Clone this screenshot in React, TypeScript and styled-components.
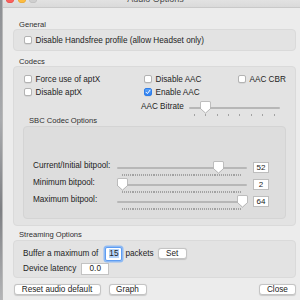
import styled, { createGlobalStyle } from 'styled-components';

const GlobalStyle = createGlobalStyle`
  html, body {
    margin: 0;
    padding: 0;
    background: #ececec;
  }
`;

const Page = styled.div`
  display: flex;
  width: 300px;
  height: 300px;
  overflow: hidden;
  background: #ececec;
  font-family: "Liberation Sans", Arial, sans-serif;
  color: #232323;
`;

const DesktopStrip = styled.div`
  width: 2px;
  flex: none;
  background: linear-gradient(180deg, #8d8f93, #a9abae 40%, #7e8084 70%, #b4b5b7);
`;

const Window = styled.div`
  flex: 1;
  display: flex;
  flex-direction: column;
  border-left: 1px solid #b8b8b8;
  background: #ececec;
`;

const TitleBar = styled.div`
  display: grid;
  grid-template-columns: 1fr auto 1fr;
  height: 7px;
  overflow: hidden;
  border-bottom: 1px solid #c9c9c9;
  background: linear-gradient(180deg, #e2e2e2, #dadada);
`;

const Lights = styled.div`
  display: flex;
  gap: 3.5px;
  margin: -5px 0 0 3px;
`;

const Light = styled.span<{ $color: string; $edge: string }>`
  width: 8px;
  height: 8px;
  border-radius: 50%;
  background: ${(p) => p.$color};
  box-shadow: inset 0 0 0 0.5px ${(p) => p.$edge};
`;

const Title = styled.div`
  margin-top: -6px;
  font-size: 9px;
  line-height: 10px;
  color: #4a4a4a;
`;

const Body = styled.div`
  display: flex;
  flex-direction: column;
  padding: 0 12px 0 10px;
`;

const SectionLabel = styled.div<{ $top: number; $left?: number }>`
  margin: ${(p) => p.$top}px 0 0.5px ${(p) => p.$left ?? 6}px;
  font-size: 7.6px;
  line-height: 9px;
  color: #2f2f2f;
`;

const GroupBox = styled.div`
  border: 1px solid #dadada;
  border-radius: 4px;
  background: #e3e3e3;
`;

const GeneralBox = styled(GroupBox)`
  padding: 5px 10px 5px 10px;
`;

const CodecsBox = styled(GroupBox)`
  display: flex;
  flex-direction: column;
  padding: 7px 9px 6px 10px;
`;

const CheckGrid = styled.div`
  display: grid;
  grid-template-columns: 120px 94px 1fr;
  row-gap: 3px;
`;

const CheckRow = styled.label`
  display: flex;
  align-items: center;
  gap: 3.5px;
  height: 10px;
  font-size: 8.2px;
  white-space: nowrap;
`;

const Box = styled.span<{ $checked?: boolean }>`
  display: grid;
  place-items: center;
  width: 8px;
  height: 8px;
  flex: none;
  box-sizing: border-box;
  border-radius: 2px;
  border: 0.5px solid ${(p) => (p.$checked ? '#2f7de8' : '#b3b3b3')};
  background: ${(p) => (p.$checked ? 'linear-gradient(180deg, #5aa2f8, #2f7ff0)' : '#ffffff')};
  box-shadow: 0 0.5px 0.5px rgba(0, 0, 0, 0.12);
`;

const BitrateRow = styled.div`
  display: flex;
  align-items: flex-start;
  gap: 5px;
  margin: 4px 0 0 117px;
  font-size: 8.2px;

  span {
    line-height: 12px;
  }
`;

const SbcBox = styled.div`
  display: flex;
  flex-direction: column;
  margin-left: -1px;
  padding: 34px 0 6px 9px;
  border: 1px solid #d4d4d4;
  border-radius: 4px;
  background: #dddddd;
`;

const SbcRow = styled.div`
  display: grid;
  grid-template-columns: 78px 130px 16px;
  column-gap: 6px;
  height: 17px;
  align-items: start;
  font-size: 8.2px;

  span {
    line-height: 10px;
  }
`;

const ValueBox = styled.div`
  width: 16px;
  height: 11px;
  margin-top: 1px;
  box-sizing: border-box;
  border: 0.5px solid #bdbdbd;
  background: #ffffff;
  font-size: 8px;
  line-height: 10px;
  text-align: center;
`;

const SliderWrap = styled.div<{ $width: number }>`
  position: relative;
  width: ${(p) => p.$width}px;
  height: 16px;
`;

const Track = styled.div`
  position: absolute;
  left: 0;
  right: 0;
  top: 6px;
  height: 2px;
  border-radius: 1px;
  background: #b7b7b7;
`;

const Ticks = styled.div`
  position: absolute;
  left: 5px;
  right: 5px;
  top: 13px;
  display: flex;
  justify-content: space-between;
`;

const Tick = styled.i`
  width: 1px;
  height: 2px;
  background: #a2a2a2;
`;

const Thumb = styled.svg`
  position: absolute;
  top: 0;
  width: 11px;
  height: 13px;
  filter: drop-shadow(0 0.5px 0.5px rgba(0, 0, 0, 0.25));
`;

const StreamBox = styled(GroupBox)`
  display: flex;
  flex-direction: column;
  gap: 2px;
  padding: 6px 9px 2px 9px;
  font-size: 8.2px;
`;

const StreamRow = styled.div`
  display: flex;
  align-items: center;
  white-space: nowrap;
`;

const NumberInput = styled.div<{ $w: number; $h: number; $focus?: boolean }>`
  width: ${(p) => p.$w}px;
  height: ${(p) => p.$h}px;
  box-sizing: border-box;
  display: grid;
  place-items: center;
  background: #ffffff;
  border: 0.5px solid ${(p) => (p.$focus ? '#5d9cf2' : '#c3c3c3')};
  box-shadow: ${(p) => (p.$focus ? '0 0 0 1.5px #8fbaf3' : 'none')};
  border-radius: ${(p) => (p.$focus ? '2px' : '0')};

  mark {
    background: #b5d3f8;
    color: #232323;
    padding: 0 0.5px;
  }
`;

const Button = styled.button<{ $w: number }>`
  width: ${(p) => p.$w}px;
  height: 11px;
  padding: 0;
  border: 0.5px solid #c4c4c4;
  border-radius: 3px;
  background: #ffffff;
  box-shadow: 0 0.5px 1px rgba(0, 0, 0, 0.15);
  font-family: inherit;
  font-size: 8.2px;
  line-height: 10px;
  color: #232323;
`;

const ButtonBar = styled.div`
  display: flex;
  align-items: center;
  gap: 8px;
  margin-top: 6px;
  padding-left: 0.5px;

  & > :last-child {
    margin-left: auto;
  }
`;

function Check({ label, checked }: { label: string; checked?: boolean }) {
  return (
    <CheckRow>
      <Box $checked={checked}>
        {checked ? (
          <svg width="6" height="6" viewBox="0 0 6 6">
            <path d="M1 3.2 L2.4 4.6 L5 1.2" fill="none" stroke="#fff" strokeWidth="1" strokeLinecap="round" strokeLinejoin="round" />
          </svg>
        ) : null}
      </Box>
      {label}
    </CheckRow>
  );
}

function Slider({ value, min, max, width, ticks }: { value: number; min: number; max: number; width: number; ticks: number }) {
  const frac = (value - min) / (max - min);
  const left = 5 + frac * (width - 10) - 5.5;
  return (
    <SliderWrap $width={width}>
      <Track />
      <Ticks>
        {Array.from({ length: ticks }).map((_, i) => (
          <Tick key={i} />
        ))}
      </Ticks>
      <Thumb viewBox="0 0 11 13" style={{ left }}>
        <path d="M1.8 0.5 H9.2 A1.3 1.3 0 0 1 10.5 1.8 V7.6 L5.5 12 L0.5 7.6 V1.8 A1.3 1.3 0 0 1 1.8 0.5 Z" fill="#ffffff" stroke="#a9a9a9" strokeWidth="0.6" />
      </Thumb>
    </SliderWrap>
  );
}

const bitpools = [
  { label: 'Current/Initial bitpool:', value: 52 },
  { label: 'Minimum bitpool:', value: 2 },
  { label: 'Maximum bitpool:', value: 64 },
];

export default function App() {
  return (
    <Page>
      <GlobalStyle />
      <DesktopStrip />
      <Window>
        <TitleBar>
          <Lights>
            <Light $color="#fc605c" $edge="#de4a46" />
            <Light $color="#fdbc40" $edge="#dea032" />
            <Light $color="#cfcfcf" $edge="#b9b9b9" />
          </Lights>
          <Title>Audio Options</Title>
          <div />
        </TitleBar>
        <Body>
          <SectionLabel $top={11.5}>General</SectionLabel>
          <GeneralBox>
            <Check label="Disable Handsfree profile (allow Headset only)" />
          </GeneralBox>

          <SectionLabel $top={5.5}>Codecs</SectionLabel>
          <CodecsBox>
            <CheckGrid>
              <Check label="Force use of aptX" />
              <Check label="Disable AAC" />
              <Check label="AAC CBR" />
              <Check label="Disable aptX" />
              <Check label="Enable AAC" checked />
            </CheckGrid>
            <BitrateRow>
              <span>AAC Bitrate</span>
              <Slider value={1} min={0} max={7} width={91} ticks={8} />
            </BitrateRow>
            <SectionLabel $top={-1} $left={5}>SBC Codec Options</SectionLabel>
            <SbcBox>
              {bitpools.map((b) => (
                <SbcRow key={b.label}>
                  <span>{b.label}</span>
                  <Slider value={b.value} min={2} max={64} width={130} ticks={63} />
                  <ValueBox>{b.value}</ValueBox>
                </SbcRow>
              ))}
            </SbcBox>
          </CodecsBox>

          <SectionLabel $top={4.5}>Streaming Options</SectionLabel>
          <StreamBox>
            <StreamRow>
              <span>Buffer a maximum of</span>
              <NumberInput $w={17} $h={14} $focus style={{ marginLeft: 7 }}>
                <span><mark>15</mark></span>
              </NumberInput>
              <span style={{ marginLeft: 3 }}>packets</span>
              <Button $w={29} style={{ marginLeft: 4 }}>Set</Button>
            </StreamRow>
            <StreamRow>
              <span>Device latency</span>
              <NumberInput $w={28} $h={12} style={{ marginLeft: 5 }}>
                0.0
              </NumberInput>
            </StreamRow>
          </StreamBox>

          <ButtonBar>
            <Button $w={87}>Reset audio default</Button>
            <Button $w={38}>Graph</Button>
            <Button $w={37}>Close</Button>
          </ButtonBar>
        </Body>
      </Window>
    </Page>
  );
}
